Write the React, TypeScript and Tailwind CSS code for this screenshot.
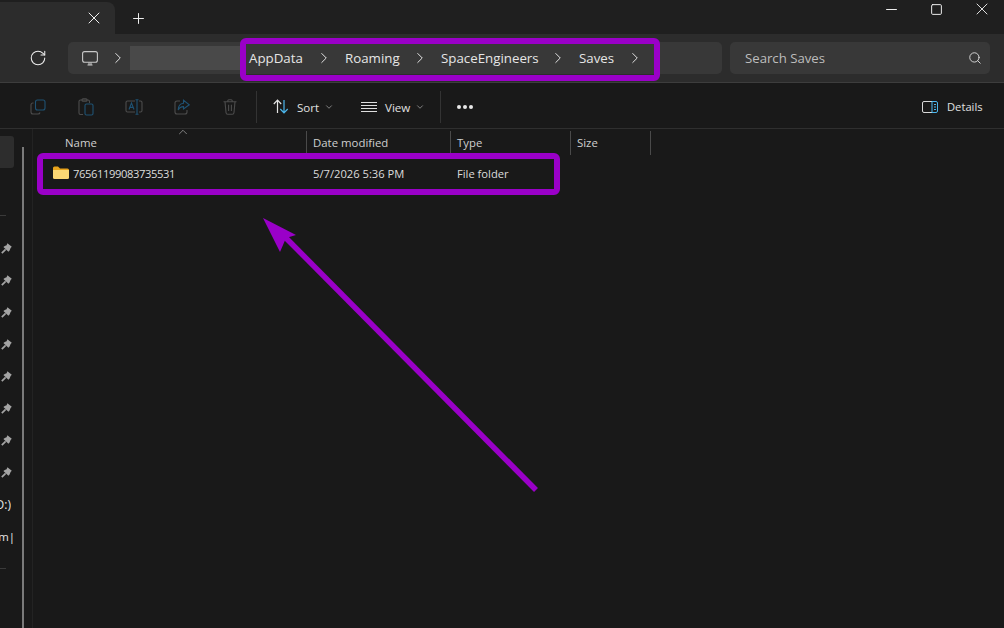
import { ChevronDown, ChevronRight, ChevronUp, Minus, Plus, RotateCw, Search, Square, X } from "lucide-react";

const font = "font-['Open_Sans','Noto_Sans',sans-serif]";

function Crumb({ label, width }: { label: string; width: string }) {
  return (
    <div className={`flex items-center pr-[12px] shrink-0 ${width}`}>
      <span className="text-[13.3px] mt-[1px] text-[#e6e6e6]">{label}</span>
      <ChevronRight size={18} strokeWidth={1.3} className="ml-auto text-[#e6e6e6]" />
    </div>
  );
}

function PinRow({ children }: { children?: React.ReactNode }) {
  return <div className="h-8 flex items-center justify-end w-[12px]">{children}</div>;
}

function Pin() {
  return (
    <svg width="11" height="11" viewBox="0 0 11 11">
      <path d="M6.4 0.2 L10.8 3.8 L9.6 5 L8.6 7.4 L7.4 8.8 L2.4 4 L3.8 3 L5.6 2.2 Z" fill="#a4a4a4" />
      <path d="M4.6 6.4 L0.8 10.2" stroke="#a4a4a4" strokeWidth="1.7" />
    </svg>
  );
}

function ToolIcon({ children }: { children: React.ReactNode }) {
  return <div className="w-[48px] h-full flex items-center justify-center">{children}</div>;
}

export default function App() {
  return (
    <div className={`relative w-[1004px] h-[628px] overflow-hidden bg-[#191919] flex flex-col ${font}`}>
      {/* title bar */}
      <div className="h-[34px] bg-[#1f1f1f] flex items-end shrink-0">
        <div className="w-[115px] h-[32px] bg-[#2c2c2c] rounded-tr-lg flex items-center justify-end pr-[11px]">
          <X size={20} strokeWidth={1.2} className="text-[#f0f0f0]" />
        </div>
        <div className="w-[46px] h-[32px] flex items-center justify-center">
          <Plus size={17} strokeWidth={1.4} className="text-[#f0f0f0]" />
        </div>
        <div className="ml-auto h-[34px] w-[135px] pb-[16px] flex items-center">
          <div className="w-[45px] flex justify-center">
            <Minus size={17} strokeWidth={1.4} className="text-[#f0f0f0]" />
          </div>
          <div className="w-[45px] flex justify-center">
            <Square size={13} strokeWidth={1.8} className="text-[#f0f0f0]" />
          </div>
          <div className="w-[45px] flex justify-center">
            <X size={20} strokeWidth={1.1} className="text-[#f0f0f0]" />
          </div>
        </div>
      </div>

      {/* address row */}
      <div className="h-[49px] shrink-0 bg-[#2c2c2c] border-b border-[#3d3d3d] flex items-center pl-[29px] pr-[14px]">
        <RotateCw size={18} strokeWidth={1.4} className="shrink-0 text-[#ededed]" />
        <div className="ml-[21px] w-[654px] shrink-0 h-[32px] bg-[#383838] rounded-[5px] flex items-center">
          <svg width="16" height="15" viewBox="0 0 16 15" fill="none" stroke="#c8c8c8" strokeWidth="1.1" className="ml-[14px] shrink-0">
            <rect x="0.6" y="0.6" width="14.8" height="10.6" rx="2" />
            <path d="M5.5 14 H10.5 M7 11.5 V14 M9 11.5 V14" />
          </svg>
          <ChevronRight size={18} strokeWidth={1.3} className="ml-[11px] shrink-0 text-[#e6e6e6]" />
          <div className="ml-[3px] w-[110px] shrink-0 h-[24px] bg-[#494949]" />
          <div className="ml-[9px] flex items-center">
            <Crumb label="AppData" width="w-[96px]" />
            <Crumb label="Roaming" width="w-[96px]" />
            <Crumb label="SpaceEngineers" width="w-[138px]" />
            <Crumb label="Saves" width="w-[77px]" />
          </div>
        </div>
        <div className="ml-[8px] w-[260px] shrink-0 h-[32px] bg-[#383838] rounded-[5px] flex items-center pl-[15px] pr-[8px]">
          <span className="text-[13.2px] mt-[1px] text-[#bdbdbd]">Search Saves</span>
          <Search size={14} strokeWidth={1.6} className="ml-auto text-[#dadada]" />
        </div>
      </div>

      {/* toolbar */}
      <div className="h-[46px] shrink-0 border-b border-[#2f2f2f] flex items-center pt-[3px] pl-[14px] pr-[21px]">
        <div className="flex items-center h-full">
          <ToolIcon>
            <svg width="16" height="16" viewBox="0 0 16 16" fill="none" strokeWidth="1.1">
              <rect x="5.5" y="1" width="9.5" height="10" rx="2" stroke="#1f5273" />
              <path d="M3.5 4 H2.8 A1.8 1.8 0 0 0 1 5.8 V13 A2 2 0 0 0 3 15 H8 A2 2 0 0 0 10 13.5" stroke="#4c4c4c" />
            </svg>
          </ToolIcon>
          <ToolIcon>
            <svg width="16" height="18" viewBox="0 0 16 18" fill="none" strokeWidth="1.1">
              <path d="M5 16.5 H2.5 A1.5 1.5 0 0 1 1 15 V3.5 A1.5 1.5 0 0 1 2.5 2 H10 A1.5 1.5 0 0 1 11.5 3.5 V5" stroke="#4c4c4c" />
              <rect x="4" y="0.8" width="5" height="2.4" rx="1" stroke="#4c4c4c" />
              <rect x="7" y="6" width="8" height="11" rx="1.5" stroke="#1f5273" />
            </svg>
          </ToolIcon>
          <ToolIcon>
            <svg width="18" height="16" viewBox="0 0 18 16" fill="none" strokeWidth="1.1">
              <path d="M10 2 H2.5 A1.5 1.5 0 0 0 1 3.5 V11.5 A1.5 1.5 0 0 0 2.5 13 H10 M14 2 H15.5 A1.5 1.5 0 0 1 17 3.5 V11.5 A1.5 1.5 0 0 1 15.5 13 H14" stroke="#4c4c4c" />
              <path d="M12 1 V15 M10.5 0.7 H13.5 M10.5 15.3 H13.5" stroke="#1f5273" />
              <path d="M4 10.5 L6.5 4 L9 10.5 M4.9 8.4 H8.1" stroke="#1f5273" />
            </svg>
          </ToolIcon>
          <ToolIcon>
            <svg width="16" height="16" viewBox="0 0 16 16" fill="none" strokeWidth="1.1">
              <path d="M6 2 H3 A2 2 0 0 0 1 4 V13 A2 2 0 0 0 3 15 H11 A2 2 0 0 0 13 13 V11" stroke="#4c4c4c" />
              <path d="M9.5 1.2 L15.3 5.8 L9.5 10 V7.6 C6.8 7.6 5.2 8.8 4.2 11 C4.2 7.5 6 4.6 9.5 4.2 Z" stroke="#1f5273" />
            </svg>
          </ToolIcon>
          <ToolIcon>
            <svg width="14" height="16" viewBox="0 0 14 16" fill="none" stroke="#4c4c4c" strokeWidth="1.1">
              <path d="M0.5 2.8 H13.5 M4.8 2.8 V1.8 A1 1 0 0 1 5.8 0.8 H8.2 A1 1 0 0 1 9.2 1.8 V2.8 M2 2.8 L3 13.5 A1.8 1.8 0 0 0 4.8 15.2 H9.2 A1.8 1.8 0 0 0 11 13.5 L12 2.8 M5.6 5.8 V12 M8.4 5.8 V12" />
            </svg>
          </ToolIcon>
        </div>
        <div className="ml-[2px] w-px h-[32px] bg-[#333333]" />
        <div className="ml-[16px] flex items-center">
          <svg width="16" height="15" viewBox="0 0 16 15" fill="none" strokeWidth="1.2">
            <path d="M4.5 14 V1.2 M0.8 5 L4.5 1.2 L8.2 5" stroke="#e4e4e4" />
            <path d="M11 1 V13.8 M7.3 10 L11 13.8 L14.7 10" stroke="#4cb8ee" />
          </svg>
          <span className="ml-[8px] mt-[1px] w-[23px] text-[11.6px] font-medium text-[#e0e0e0]">Sort</span>
          <ChevronDown size={10} strokeWidth={1.5} className="ml-[4px] text-[#bdbdbd]" />
        </div>
        <div className="ml-[27px] flex items-center">
          <svg width="16" height="12" viewBox="0 0 16 12" stroke="#dedede" strokeWidth="1">
            <path d="M0 1.5 H16 M0 4.5 H16 M0 7.5 H16 M0 10.5 H16" />
          </svg>
          <span className="ml-[8px] mt-[1px] w-[26px] text-[11.6px] font-medium text-[#e0e0e0]">View</span>
          <ChevronDown size={10} strokeWidth={1.5} className="ml-[4px] text-[#bdbdbd]" />
        </div>
        <div className="ml-[15px] w-px h-[32px] bg-[#333333]" />
        <div className="ml-[16px] flex gap-[2px]">
          <div className="w-[4px] h-[4px] rounded-full bg-[#e8e8e8]" />
          <div className="w-[4px] h-[4px] rounded-full bg-[#e8e8e8]" />
          <div className="w-[4px] h-[4px] rounded-full bg-[#e8e8e8]" />
        </div>
        <div className="ml-auto flex items-center">
          <svg width="16" height="12" viewBox="0 0 16 12" fill="none" strokeWidth="1">
            <path d="M10 0.5 H2 A1.5 1.5 0 0 0 0.5 2 V10 A1.5 1.5 0 0 0 2 11.5 H10" stroke="#d8d8d8" />
            <path d="M10 0.5 H14 A1.5 1.5 0 0 1 15.5 2 V10 A1.5 1.5 0 0 1 14 11.5 H10 Z M12 3.5 H14 M12 6 H14 M12 8.5 H14" stroke="#4cb8ee" />
          </svg>
          <span className="ml-[9px] mt-[1px] text-[11.2px] font-medium text-[#e0e0e0] w-[36px] whitespace-nowrap">Details</span>
        </div>
      </div>

      {/* body */}
      <div className="flex-1 flex min-h-0">
        <div className="w-[33px] shrink-0 border-r border-[#232323] relative flex">
          <div className="w-[22px] shrink-0 flex flex-col">
            <div className="mt-[7px] w-[14px] h-[32px] bg-[#2d2d2d] rounded-r-[3px]" />
            <div className="mt-[47px] w-[6px] h-px bg-[#3a3a3a]" />
            <div className="mt-[16px]">
              {[0, 1, 2, 3, 4, 5, 6, 7].map((i) => (
                <PinRow key={i}>
                  <Pin />
                </PinRow>
              ))}
            </div>
            <div className="mt-[1px] h-8 flex items-center text-[12px] text-[#e6e6e6] w-[11px] justify-end overflow-hidden">
              <span>D:)</span>
            </div>
            <div className="h-8 flex items-center text-[11.4px] text-[#e6e6e6] w-[15px] justify-end overflow-hidden whitespace-nowrap">
              <span>em|</span>
            </div>
            <div className="mt-[15px] w-[6px] h-px bg-[#3a3a3a]" />
          </div>
          <div className="mt-[18px] w-[2px] h-full bg-[#7a7a7a]" />
        </div>

        <div className="flex-1 relative">
          <ChevronUp size={14} strokeWidth={1.3} className="absolute left-[143px] -top-[4px] text-[#a0a0a0]" />
          <div className="mt-[1px] flex h-[25px] pt-[1px] text-[11.4px] text-[#cfcfcf]">
            <div className="w-[274px] pl-[32px] flex items-center border-r border-[#4a4a4a]">Name</div>
            <div className="w-[144px] pl-[6px] flex items-center border-r border-[#4a4a4a]">Date modified</div>
            <div className="w-[120px] pl-[6px] flex items-center border-r border-[#4a4a4a]">Type</div>
            <div className="w-[80px] pl-[6px] flex items-center border-r border-[#4a4a4a]">Size</div>
          </div>
          <div className="mt-[7px] flex h-[24px] items-center text-[11.2px] text-[#dcdcdc]">
            <div className="w-[274px] pl-[20px] flex items-center">
              <svg width="16" height="13" viewBox="0 0 16 13" className="mb-[2px]">
                <path d="M0 2 A1.5 1.5 0 0 1 1.5 0.5 H5 L7 2.5 H14.5 A1.5 1.5 0 0 1 16 4 V5 H0 Z" fill="#e9a41c" />
                <path d="M0 4 H16 V11.5 A1.5 1.5 0 0 1 14.5 13 H1.5 A1.5 1.5 0 0 1 0 11.5 Z" fill="#fbd774" />
              </svg>
              <span className="ml-[4px] tracking-[-0.4px]">76561199083735531</span>
            </div>
            <div className="w-[144px] pl-[6px]">5/7/2026 5:36 PM</div>
            <div className="w-[120px] pl-[6px]">File folder</div>
          </div>
        </div>
      </div>

      {/* annotations drawn over the screenshot */}
      <div className="absolute left-[240px] top-[38px] w-[420px] h-[43px] border-[6px] border-[#9a00c8] rounded-[6px]" />
      <div className="absolute left-[37px] top-[153px] w-[523px] h-[42px] border-[6px] border-[#9a00c8] rounded-[6px]" />
      <svg className="absolute left-0 top-0 pointer-events-none" width="1004" height="628" viewBox="0 0 1004 628">
        <path d="M536 490 L284 236" stroke="#9a00c8" strokeWidth="5.5" />
        <path d="M263 218 L296 235 L286 238 L280 252 Z" fill="#9a00c8" />
      </svg>
    </div>
  );
}
